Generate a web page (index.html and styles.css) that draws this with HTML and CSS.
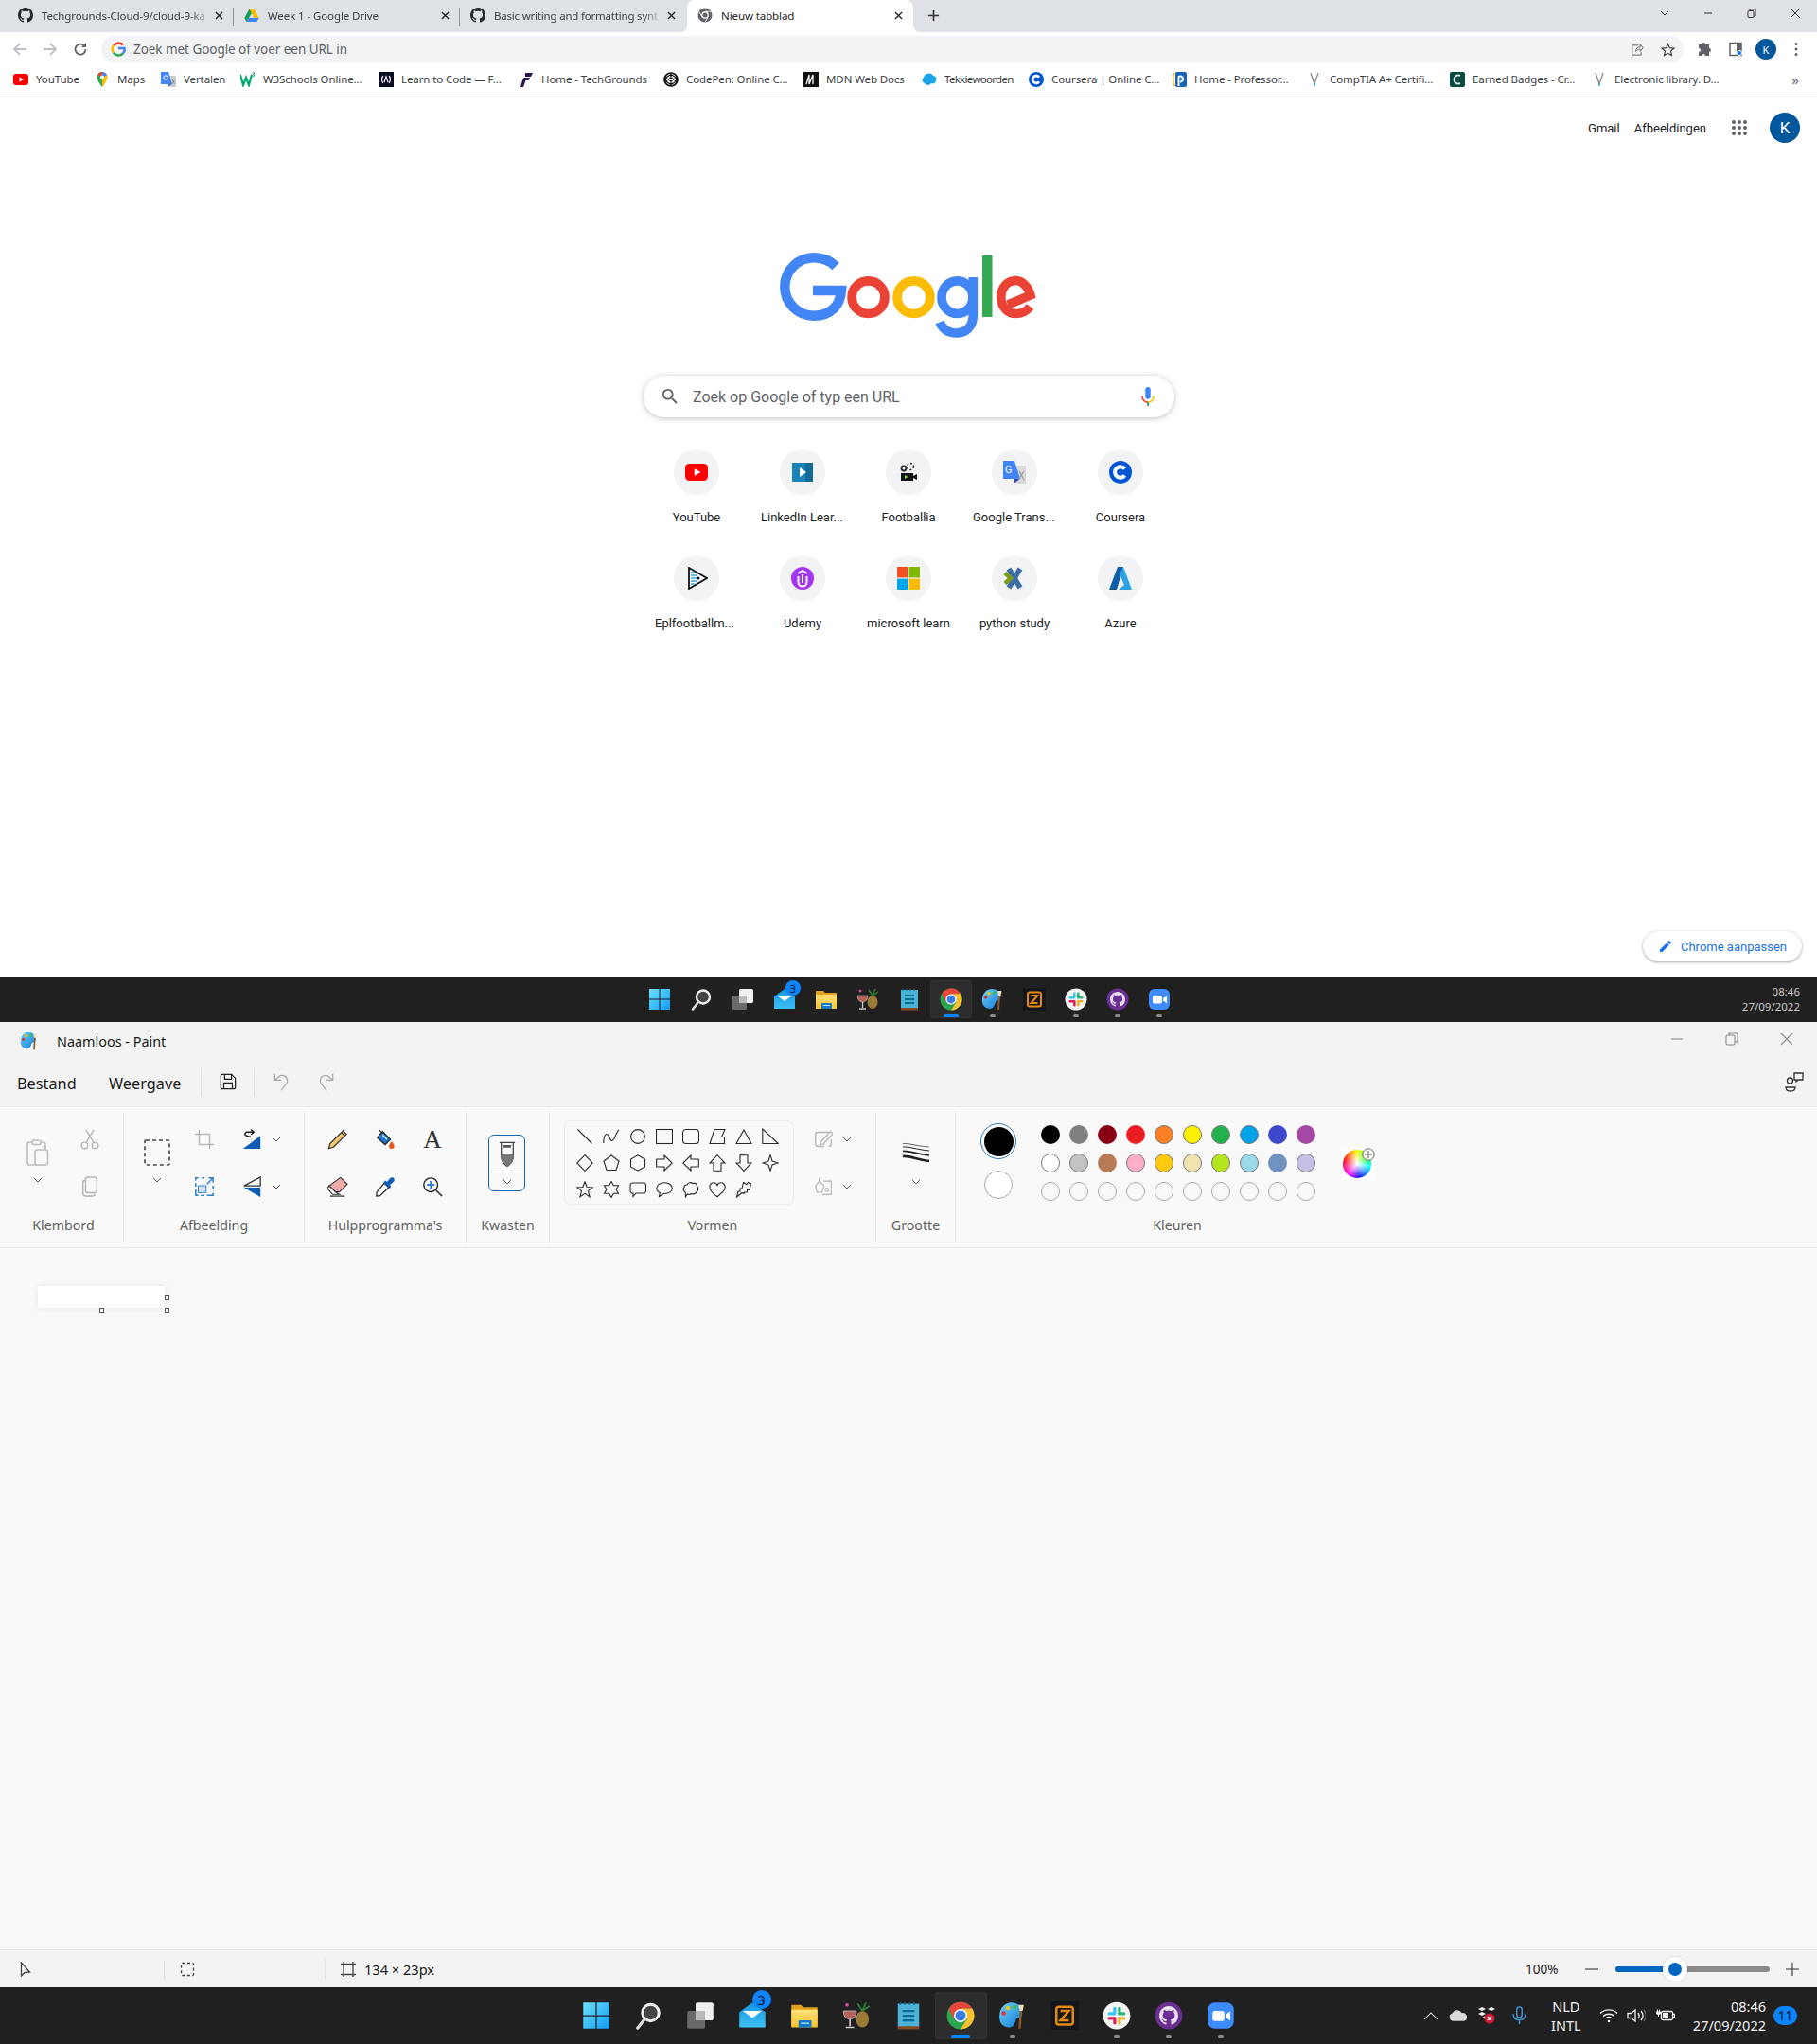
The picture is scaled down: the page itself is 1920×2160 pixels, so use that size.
FILE: index.html
```html
<!DOCTYPE html>
<html lang="nl">
<head>
<meta charset="utf-8">
<title>Nieuw tabblad</title>
<link rel="stylesheet" href="styles.css">
</head>
<body>
<svg class="sprite" aria-hidden="true">
<defs>
<linearGradient id="gwin" x1="0" y1="0" x2="1" y2="1"><stop offset="0" stop-color="#6fe0fb"/><stop offset="1" stop-color="#0f9bf5"/></linearGradient>
<linearGradient id="gmail" x1="0" y1="0" x2="0" y2="1"><stop offset="0" stop-color="#1795e0"/><stop offset="1" stop-color="#3cc0f5"/></linearGradient>
<linearGradient id="gfold" x1="0" y1="0" x2="0" y2="1"><stop offset="0" stop-color="#ffe27a"/><stop offset="1" stop-color="#f7c22f"/></linearGradient>
<linearGradient id="gpal" x1="0" y1="0" x2="1" y2="1"><stop offset="0" stop-color="#6ad4f7"/><stop offset="1" stop-color="#1578d8"/></linearGradient>

<symbol id="s-line" viewBox="0 0 18 18"><path d="M1.5 1.5L16.5 16.5"/></symbol>
<symbol id="s-curve" viewBox="0 0 18 18"><path d="M.8 16C.8 8 3.5 4 6 8c2 4 3 8 6 3 2-4 3-8 5.2-9"/></symbol>
<symbol id="s-oval" viewBox="0 0 18 18"><circle cx="9" cy="9" r="7.4"/></symbol>
<symbol id="s-rect" viewBox="0 0 18 18"><rect x=".5" y="1.5" width="17" height="15"/></symbol>
<symbol id="s-rrect" viewBox="0 0 18 18"><rect x=".5" y="1.5" width="17" height="15" rx="3.5"/></symbol>
<symbol id="s-poly" viewBox="0 0 18 18"><path d="M6 1.5H17L13.5 9.5H16.5V16.5H1Z"/></symbol>
<symbol id="s-tri" viewBox="0 0 18 18"><path d="M9 2L17 16.5H1Z"/></symbol>
<symbol id="s-rtri" viewBox="0 0 18 18"><path d="M.8 1V16.5H17.5Z"/></symbol>
<symbol id="s-dia" viewBox="0 0 18 18"><path d="M9 .7L17.3 9 9 17.3.7 9Z"/></symbol>
<symbol id="s-pent" viewBox="0 0 18 18"><path d="M9 1L17 7 14 16.5H4L1 7Z"/></symbol>
<symbol id="s-hex" viewBox="0 0 18 18"><path d="M9 .8L16.5 5V13L9 17.2 1.5 13V5Z"/></symbol>
<symbol id="s-ar" viewBox="0 0 18 18"><path d="M.7 5H9V1L17.3 9 9 17V13H.7Z"/></symbol>
<symbol id="s-al" viewBox="0 0 18 18"><path d="M17.3 5H9V1L.7 9 9 17V13H17.3Z"/></symbol>
<symbol id="s-au" viewBox="0 0 18 18"><path d="M5 17.3V9H1L9 .7 17 9H13V17.3Z"/></symbol>
<symbol id="s-ad" viewBox="0 0 18 18"><path d="M5 .7V9H1L9 17.3 17 9H13V.7Z"/></symbol>
<symbol id="s-st4" viewBox="0 0 18 18"><path d="M9 .7L11 7 17.3 9 11 11 9 17.3 7 11 .7 9 7 7Z"/></symbol>
<symbol id="s-st5" viewBox="0 0 18 18"><path d="M9 .8L11.2 6.5 17.2 6.8 12.5 10.7 14.1 16.8 9 13.4 3.9 16.8 5.5 10.7.8 6.8 6.8 6.5Z"/></symbol>
<symbol id="s-st6" viewBox="0 0 18 18"><path d="M9 .5L11.3 4.8H16.5L14 9 16.5 13.2H11.3L9 17.5 6.7 13.2H1.5L4 9 1.5 4.8H6.7Z"/></symbol>
<symbol id="s-b1" viewBox="0 0 18 18"><path d="M3.5 2H15A2.5 2.5 0 0 1 17.5 4.5V10.5A2.5 2.5 0 0 1 15 13H7L4 16.5V13H3.5A2.5 2.5 0 0 1 1 10.5V4.5A2.5 2.5 0 0 1 3.5 2Z"/></symbol>
<symbol id="s-b2" viewBox="0 0 18 18"><path d="M9 1.8C14 1.8 17.3 4.5 17.3 7.8S14 13.5 9 13.5H8L3.5 16.5 4.3 12.5C2.2 11.5.8 9.9.8 7.8.8 4.5 4 1.8 9 1.8Z"/></symbol>
<symbol id="s-b3" viewBox="0 0 18 18"><path d="M5 4C6 1.5 9 1 11 2.5 13.5 1.5 15.5 3 15.5 5.5 17.5 7 17 10.5 15 11.5 14.5 13.5 11.5 14.5 9.5 13.5 8 15 6 14.5 5.3 13.8L3.5 16.8 3.2 12C1 11 .5 8 2 6.5 2 5 3.5 4 5 4Z"/></symbol>
<symbol id="s-heart" viewBox="0 0 18 18"><path d="M9 16.8C3 12.3.8 9.3.8 6.2.8 3.5 3 1.8 5 1.8 7 1.8 8.5 3 9 4.5 9.5 3 11 1.8 13 1.8 15 1.8 17.2 3.5 17.2 6.2 17.2 9.3 15 12.3 9 16.8Z"/></symbol>
<symbol id="s-bolt" viewBox="0 0 18 18"><path d="M8.5 1.5L12 3.5 13.5 1.5 16.5 3 15 9.5H12.5V12H9.5L9 13.5 7 12.5 1.5 17 3 11H5V8H7Z"/></symbol>

<symbol id="i-chev" viewBox="0 0 10 10"><path d="M1 3l4 4 4-4" fill="none" stroke="#555" stroke-width="1"/></symbol>
<symbol id="i-paste" viewBox="0 0 24 28" fill="none" stroke="#bdbdbd" stroke-width="1.6"><rect x="1" y="3" width="19" height="24" rx="2.5"/><rect x="6" y="1" width="9" height="4.5" rx="1.5" fill="#f9f9f9"/><rect x="9" y="11" width="13.5" height="16" rx="2.5" fill="#f9f9f9"/></symbol>
<symbol id="i-cut" viewBox="0 0 24 24" fill="none" stroke="#b5b5b5" stroke-width="1.5"><circle cx="6" cy="19" r="3.6"/><circle cx="18" cy="19" r="3.6"/><path d="M7.5 16L16.5 1M16.5 16L7.5 1"/></symbol>
<symbol id="i-copy" viewBox="0 0 24 24" fill="none" stroke="#b5b5b5" stroke-width="1.6"><rect x="7" y="1" width="13" height="18" rx="2.5"/><path d="M7 4.5C5 4.500 4 5.500 4 7V20C4 22 5.500 23 7 23H15C16.500 23 17.500 22 17.500 20.500"/></symbol>
<symbol id="i-select" viewBox="0 0 28 28"><rect x="1" y="1" width="26" height="26" rx="1" fill="none" stroke="#444" stroke-width="1.6" stroke-dasharray="4 3"/></symbol>
<symbol id="i-crop" viewBox="0 0 24 24" fill="none" stroke="#b5b5b5" stroke-width="1.5"><path d="M6 1V18H23M1 6H18V23"/></symbol>
<symbol id="i-resize" viewBox="0 0 24 24" fill="none" stroke="#2b7cc9" stroke-width="1.6"><path d="M5 2H2V5M2 8V12M2 15V22H5M8 22H12M15 22H22V19M22 15V11M9 2H12"/><path d="M15 9L22 2M17 2H22V7"/><rect x="5" y="11" width="9" height="8" fill="#cfe3f5" stroke-width="1"/></symbol>
<symbol id="i-rotate" viewBox="0 0 24 24"><path d="M22 8V23H2Z" fill="#0b5cb5"/><path d="M11 9C5 9 2 6 6 3.500H14M11 .5L14.500 3.500 11 6.500" fill="none" stroke="#222" stroke-width="1.6"/></symbol>
<symbol id="i-flip" viewBox="0 0 24 24"><path d="M22 13V24L3 13Z" fill="#0b5cb5"/><path d="M22 11V1L3 11Z" fill="none" stroke="#333" stroke-width="1.4"/></symbol>
<symbol id="i-pencil" viewBox="0 0 24 24"><path d="M18 2L22 6 7 21 1.500 22.500 3 17Z" fill="#f2c66d" stroke="#333" stroke-width="1.3"/><path d="M16 4L20 8" stroke="#333" stroke-width="1.3"/></symbol>
<symbol id="i-fill" viewBox="0 0 24 24"><path d="M9 3L18 12 12 18 3 10Z" fill="#1c7ad2" stroke="#222" stroke-width="1.4"/><path d="M9 7L14 12" stroke="#fff" stroke-width="1.3"/><path d="M5 1L9 5" stroke="#222" stroke-width="1.4"/><path d="M19.500 14C21 17 22.500 18 22.500 20A3 3 0 0 1 16.500 20C16.500 18 18 17 19.500 14Z" fill="#e4561d"/></symbol>
<symbol id="i-eraser" viewBox="0 0 24 24"><path d="M15 1.500L23 9 14 18H9L2 11Z" fill="#f2abab" stroke="#333" stroke-width="1.2"/><path d="M2 11L0 14 6 21H14L9 18Z" fill="#fff" stroke="#333" stroke-width="1.2"/><path d="M3 23H20" stroke="#333" stroke-width="1.4"/></symbol>
<symbol id="i-picker" viewBox="0 0 24 24"><path d="M11 8L16 13 6 22.500 2 23 2.300 18.500Z" fill="#fff" stroke="#222" stroke-width="1.4"/><path d="M10 7L17 14 19 12 17.500 10 22 6C24 3 21 0 18 2L14 6.500 12 5Z" fill="#0e5fb8"/></symbol>
<symbol id="i-zoom" viewBox="0 0 24 24" fill="none"><circle cx="10" cy="10" r="8" stroke="#222" stroke-width="1.5"/><path d="M16 16L23 23" stroke="#222" stroke-width="1.6"/><path d="M10 5.500V14.500M5.500 10H14.500" stroke="#1c7ad2" stroke-width="1.8"/></symbol>
<symbol id="i-brush" viewBox="0 0 20 32"><path d="M1 3H19M3 3V20C3 25 7 29 10 31 13 29 17 25 17 20V3" fill="none" stroke="#444" stroke-width="1.4"/><path d="M3 16H17V20C17 25 13 29 10 31 7 29 3 25 3 20Z" fill="#777"/><path d="M5 6H15L14 9H6Z" fill="#555"/></symbol>
<symbol id="i-outline" viewBox="0 0 24 24" fill="none" stroke="#b5b5b5" stroke-width="1.6"><path d="M19 3H5A3 3 0 0 0 2 6V18A3 3 0 0 0 5 21H13M22 12V18A3 3 0 0 1 19 21"/><path d="M21 2L24 5 12 18 8 19 9 15Z"/></symbol>
<symbol id="i-fillshape" viewBox="0 0 24 24" fill="none" stroke="#b5b5b5" stroke-width="1.4"><path d="M12 5H22V22H11"/><path d="M2 11L7 5 13 11 10 19H4Z"/><path d="M7 1V6"/><circle cx="16.500" cy="16" r="2.200"/></symbol>
<symbol id="i-size" viewBox="0 0 30 24" fill="none" stroke="#222"><path d="M1 1.500C8 1 14 4 29 5" stroke-width=".7"/><path d="M1 5C8 4.500 14 7.500 29 9" stroke-width="1"/><path d="M1 9.500C8 9 14 12 29 14" stroke-width="1.7"/><path d="M1 15C8 14 14 18 29 20" stroke-width="2.6"/></symbol>
<symbol id="i-save" viewBox="0 0 20 20" fill="none" stroke="#222" stroke-width="1.4"><path d="M3 1.500H14L18.500 6V17A1.500 1.500 0 0 1 17 18.500H3A1.500 1.500 0 0 1 1.500 17V3A1.500 1.500 0 0 1 3 1.500Z"/><path d="M6 1.500V7H14V1.500M5 18.500V11.500H15V18.500"/></symbol>
<symbol id="i-undo" viewBox="0 0 20 24" fill="none" stroke="#aaa" stroke-width="1.5"><path d="M2 2V10H10M2 10L8 5C12 3 18 5 18 11 18 14 15 17 10 23"/></symbol>
<symbol id="i-redo" viewBox="0 0 20 24" fill="none" stroke="#aaa" stroke-width="1.5"><path d="M18 2V10H10M18 10L12 5C8 3 2 5 2 11 2 14 5 17 10 23"/></symbol>
<symbol id="i-share2" viewBox="0 0 22 22" fill="none" stroke="#333" stroke-width="1.3"><circle cx="6.500" cy="10" r="3"/><path d="M2 17H12C12 20 10 21 7 21S2 20 2 17Z"/><path d="M11 2H20V9H15L13 11V9H11Z"/></symbol>

<symbol id="t-win" viewBox="0 0 24 24"><path d="M1 1H11.500V11.500H1ZM12.500 1H23V11.500H12.500ZM1 12.500H11.500V23H1ZM12.500 12.500H23V23H12.500Z" fill="url(#gwin)"/></symbol>
<symbol id="t-search" viewBox="0 0 24 24"><circle cx="14" cy="9.500" r="7" fill="#444" stroke="#eee" stroke-width="2.4"/><path d="M9 15L3 22.500" stroke="#ddd" stroke-width="2.6" stroke-linecap="round"/></symbol>
<symbol id="t-task" viewBox="0 0 24 24"><rect x="8" y="1" width="15" height="15" rx="1.500" fill="#f0f0f0"/><rect x="1" y="8" width="15" height="15" rx="1.500" fill="#6a6a6a"/><rect x="8" y="8" width="8" height="8" fill="#bbb"/></symbol>
<symbol id="t-mail" viewBox="0 0 24 24"><path d="M12 1L23 9V22H1V9Z" fill="url(#gmail)"/><path d="M4 8H20L12 14Z" fill="#fff"/></symbol>
<symbol id="t-folder" viewBox="0 0 24 24"><path d="M1 3H9L11 5H23V21H1Z" fill="#e0a21a"/><path d="M1 7H23V22H1Z" fill="url(#gfold)"/><rect x="7" y="16" width="11" height="6" rx="1" fill="#1479c9"/><rect x="9" y="18" width="7" height="1" fill="#bfe3fa"/></symbol>
<symbol id="t-bar" viewBox="0 0 24 24"><path d="M1 8H12C12 12 10 15 6.500 15 3 15 1 12 1 8Z" fill="#b5635a" stroke="#ccc" stroke-width=".6"/><path d="M6.500 15V21M3 22H10" stroke="#ccc" stroke-width="1.3"/><ellipse cx="17" cy="15" rx="5.500" ry="7" fill="#9a7a34"/><path d="M17 8L13 2M17 8L20 1M17 8L23 4" stroke="#2e7d32" stroke-width="1.5"/><circle cx="4" cy="3" r="1.500" fill="#d24aa0"/></symbol>
<symbol id="t-note" viewBox="0 0 24 24"><rect x="3" y="2" width="18" height="20" fill="#49b4d6"/><rect x="3" y="21" width="18" height="2.500" fill="#8a4b22"/><path d="M7 8H17M7 12H17M7 16H17" stroke="#0f6a8f" stroke-width="1.800"/><path d="M5 1V3M9 1V3M13 1V3M17 1V3" stroke="#0f6a8f" stroke-width="1.200"/></symbol>
<symbol id="t-chrome" viewBox="0 0 24 24"><circle cx="12" cy="12" r="11.500" fill="#2da44e"/><path d="M12 .5A11.500 11.500 0 0 1 22 6.250H12L6.500 15 2.100 6.300A11.500 11.500 0 0 1 12 .5Z" fill="#e8453c"/><path d="M22 6.250A11.500 11.500 0 0 1 12 23.500L17.500 15 12 6.250Z" fill="#fbc02d"/><circle cx="12" cy="12" r="5.600" fill="#fff"/><circle cx="12" cy="12" r="4.400" fill="#3b7de8"/></symbol>
<symbol id="t-paint" viewBox="0 0 24 24"><path d="M11 1C17 1 21 5 20 11 19.500 14 16 13 15 15 14 18 13 22 9 22 4 22 0 18 1 11 1.500 5 6 1 11 1Z" fill="url(#gpal)"/><circle cx="8" cy="5.500" r="1.800" fill="#f4c20d"/><circle cx="13.500" cy="5" r="1.800" fill="#3cba54"/><circle cx="4.500" cy="10" r="1.800" fill="#db3236"/><path d="M19 7L18 23" stroke="#8a5a2b" stroke-width="2"/><path d="M17 3H21.500L20.500 8H18Z" fill="#f0e0b8"/></symbol>
<symbol id="t-zapp" viewBox="0 0 24 24"><rect x="0" y="0" width="24" height="24" fill="#14181c"/><rect x="5" y="4.500" width="14" height="15" rx="2" fill="none" stroke="#e8890c" stroke-width="2"/><path d="M8.500 8H15.500L8.500 16H15.500" fill="none" stroke="#e8890c" stroke-width="2"/></symbol>
<symbol id="t-slack" viewBox="0 0 24 24"><circle cx="12" cy="12" r="11.500" fill="#f5f5f5"/><rect x="9" y="4.500" width="2.600" height="6.500" rx="1.300" fill="#36c5f0"/><rect x="4.500" y="9" width="6.500" height="2.600" rx="1.300" fill="#36c5f0"/><rect x="13" y="4.500" width="2.600" height="6.500" rx="1.300" fill="#2eb67d"/><rect x="13" y="9" width="6.500" height="2.600" rx="1.300" fill="#2eb67d"/><rect x="13" y="13" width="6.500" height="2.600" rx="1.300" fill="#ecb22e"/><rect x="13" y="13" width="2.600" height="6.500" rx="1.300" fill="#ecb22e"/><rect x="9" y="13" width="2.600" height="6.500" rx="1.300" fill="#e01e5a"/><rect x="4.500" y="13" width="6.500" height="2.600" rx="1.300" fill="#e01e5a"/></symbol>
<symbol id="t-gh" viewBox="0 0 24 24"><circle cx="12" cy="12" r="11.500" fill="#6b2f93"/><g transform="translate(4 4)"><path fill="#e8e0f0" d="M8 0C3.580 0 0 3.580 0 8c0 3.540 2.290 6.530 5.470 7.590.4.070.55-.17.55-.38 0-.19-.01-.82-.01-1.490-2.010.37-2.530-.49-2.690-.94-.09-.23-.48-.94-.82-1.130-.28-.15-.68-.52-.01-.53.630-.01 1.080.58 1.230.82.720 1.210 1.870.87 2.330.66.070-.52.28-.87.51-1.070-1.780-.2-3.640-.89-3.640-3.950 0-.87.31-1.590.82-2.150-.08-.2-.36-1.020.08-2.120 0 0 .67-.21 2.200.82.640-.18 1.320-.27 2-.27.68 0 1.360.09 2 .27 1.530-1.040 2.200-.82 2.200-.82.44 1.100.16 1.920.08 2.120.51.56.82 1.270.82 2.150 0 3.070-1.870 3.750-3.650 3.950.29.25.54.73.54 1.480 0 1.070-.01 1.930-.01 2.200 0 .21.15.46.55.38A8.013 8.013 0 0016 8c0-4.420-3.580-8-8-8z"/></g></symbol>
<symbol id="t-zoom" viewBox="0 0 24 24"><rect x="1" y="1" width="22" height="22" rx="6" fill="#3d8bfd"/><rect x="5" y="8" width="10" height="8.500" rx="2" fill="#fff"/><path d="M16 11L20 8.300V16.200L16 13.500Z" fill="#fff"/></symbol>

<symbol id="f-gh" viewBox="0 0 16 16"><path fill="#24292f" d="M8 0C3.580 0 0 3.580 0 8c0 3.540 2.290 6.530 5.470 7.590.4.070.55-.17.55-.38 0-.19-.01-.82-.01-1.490-2.010.37-2.530-.49-2.690-.94-.09-.23-.48-.94-.82-1.130-.28-.15-.68-.52-.01-.53.630-.01 1.080.58 1.230.82.720 1.210 1.870.87 2.330.66.070-.52.28-.87.51-1.070-1.780-.2-3.640-.89-3.640-3.950 0-.87.31-1.590.82-2.150-.08-.2-.36-1.020.08-2.120 0 0 .67-.21 2.200.82.640-.18 1.320-.27 2-.27.68 0 1.360.09 2 .27 1.530-1.040 2.200-.82 2.200-.82.44 1.100.16 1.920.08 2.120.51.56.82 1.270.82 2.150 0 3.070-1.870 3.750-3.650 3.950.29.25.54.73.54 1.480 0 1.070-.01 1.930-.01 2.200 0 .21.15.46.55.38A8.013 8.013 0 0016 8c0-4.420-3.580-8-8-8z"/></symbol>
<symbol id="f-drive" viewBox="0 0 16 16"><path d="M5.500 1.500H10.500L5 11 2.500 15 .3 11Z" fill="#0f9d58"/><path d="M10.500 1.500L15.700 11H10.500L5.500 1.500Z" fill="#fbbc05"/><path d="M5 11H15.700L13.300 15H2.600Z" fill="#4285f4"/></symbol>
<symbol id="f-newtab" viewBox="0 0 16 16"><circle cx="8" cy="8" r="7.500" fill="#5f6368"/><circle cx="8" cy="8" r="3.800" fill="#fff"/><circle cx="8" cy="8" r="2.500" fill="#5f6368"/><path d="M8 4.200H14.500M5 10L1.800 4.500M11.200 10L8 15.500" stroke="#fff" stroke-width=".9"/></symbol>
<symbol id="f-g" viewBox="0 0 16 16" fill="none" stroke-width="2.600"><path d="M13 3.500A6.500 6.500 0 0 0 3 4.200" stroke="#ea4335"/><path d="M3 4.200A6.500 6.500 0 0 0 3 11.800" stroke="#fbbc05"/><path d="M3 11.800A6.500 6.500 0 0 0 13 12.500" stroke="#34a853"/><path d="M13 12.500A6.500 6.500 0 0 0 14.500 7H8" stroke="#4285f4"/></symbol>
<symbol id="f-yt" viewBox="0 0 16 16"><rect x="0" y="2" width="16" height="12" rx="3" fill="#f00"/><path d="M6.500 5.500L11 8 6.500 10.500Z" fill="#fff"/></symbol>
<symbol id="f-maps" viewBox="0 0 16 16"><path d="M8 0A5.500 5.500 0 0 0 2.500 5.500C2.500 9.500 8 16 8 16" fill="#34a853"/><path d="M8 0A5.500 5.500 0 0 1 13.500 5.500C13.500 9.500 8 16 8 16Z" fill="#fbbc05"/><path d="M3 3.500A5.500 5.500 0 0 1 8 0V4Z" fill="#ea4335"/><path d="M8 0A5.500 5.500 0 0 1 13 3.500L8 5.500Z" fill="#4285f4"/><circle cx="8" cy="5.500" r="2" fill="#fff"/></symbol>
<symbol id="f-tr" viewBox="0 0 16 16"><path d="M7 4H16V16H9Z" fill="#ccc"/><path d="M0 0H8L12 13H0Z" fill="#4285f4"/><path d="M8 13L7 16 12 13Z" fill="#3a5ed0"/><circle cx="5" cy="6" r="2.200" fill="none" stroke="#fff" stroke-width="1"/><path d="M12 8L14.500 13M14.500 8L12 13" stroke="#888" stroke-width=".8"/></symbol>
<symbol id="f-w3" viewBox="0 0 16 16"><path d="M0 3L3 14 6 6 9 14 12 3" fill="none" stroke="#04aa6d" stroke-width="2.200"/><path d="M12.500 1H15L13.500 2.500 15 4H12.500" fill="none" stroke="#04aa6d"/></symbol>
<symbol id="f-learn" viewBox="0 0 16 16"><rect width="16" height="16" fill="#0a0a23"/><path d="M5 4C3 6 3 10 5 12M11 4C13 6 13 10 11 12M6 11L8 5 10 11" fill="none" stroke="#fff" stroke-width="1.200"/></symbol>
<symbol id="f-tg" viewBox="0 0 16 16"><path d="M7 1H15L13 5H7ZM5.500 6H12L10.500 9H7.500L5 16H2L4 9Z" fill="#2c1454"/></symbol>
<symbol id="f-cp" viewBox="0 0 16 16" fill="none" stroke="#111" stroke-width="1.200"><circle cx="8" cy="8" r="7" stroke-width="1.700"/><path d="M8 2.500L13.500 6V10L8 13.500 2.500 10V6ZM8 2.500V6L2.500 10M13.500 10L8 6M8 13.500V10L2.500 6M13.500 6L8 10"/></symbol>
<symbol id="f-mdn" viewBox="0 0 16 16"><rect width="16" height="16" fill="#111"/><path d="M3 13L6 3V13L10 3V13" fill="none" stroke="#fff" stroke-width="1.300"/></symbol>
<symbol id="f-tek" viewBox="0 0 16 16"><path d="M6 2C9 1 11 2 12 4 15 4 16 7 15 9 15 12 12 13 10 12 8 15 4 14 3 12 0 11 0 7 2 6 2 4 4 2 6 2Z" fill="#1ba3e8"/></symbol>
<symbol id="f-c" viewBox="0 0 24 24"><circle cx="12" cy="12" r="12" fill="#0056d2"/><path d="M16.500 8.500A5.800 5.800 0 1 0 16.500 15.500" fill="none" stroke="#fff" stroke-width="4"/></symbol>
<symbol id="f-prof" viewBox="0 0 16 16"><path d="M4 1C1 1 1 15 4 15" fill="none" stroke="#f2b632" stroke-width="1.500"/><rect x="4" y="0" width="12" height="16" rx="2" fill="#1763b5"/><path d="M7.500 15V5A3 3 0 1 1 9 10.500" fill="none" stroke="#fff" stroke-width="2"/></symbol>
<symbol id="f-v" viewBox="0 0 16 16"><path d="M4 1L8 13 12 1" fill="none" stroke="#888" stroke-width="1.300"/><path d="M8 12V15" stroke="#3aa0c0" stroke-width="1.500"/></symbol>
<symbol id="f-cred" viewBox="0 0 16 16"><rect width="16" height="16" rx="2" fill="#0c4b41"/><path d="M11 4A4.500 4.500 0 1 0 11 12" fill="none" stroke="#e6f3f0" stroke-width="1.800"/></symbol>
<symbol id="l-li" viewBox="0 0 24 24"><rect x="1" y="2" width="22" height="20" fill="#1a84b8"/><rect x="15" y="2" width="8" height="20" fill="#146a96"/><path d="M9 7L16 12 9 17Z" fill="#fff"/></symbol>
<symbol id="l-ftb" viewBox="0 0 24 24"><rect x="4" y="13" width="13" height="8" fill="#111"/><path d="M17 16L21 14V20L17 18Z" fill="#111"/><path d="M8 15L12 17 8 19Z" fill="#7ed321"/><circle cx="7" cy="8" r="2.500" fill="none" stroke="#222" stroke-width="1.800"/><circle cx="14" cy="6" r="3.500" fill="none" stroke="#222" stroke-width="1.500" stroke-dasharray="2 2"/></symbol>
<symbol id="l-tr" viewBox="0 0 24 24"><path d="M11 5H24V24H13Z" fill="#d8d8d8"/><path d="M0 0H12L18 19H0Z" fill="#4285f4"/><path d="M12 19L11 24 18 19Z" fill="#3a3eb0"/><path d="M17 11L22 20M22 11L16 20" stroke="#999" stroke-width="1.200"/><text x="2" y="13" font-size="11" font-family="Roboto, sans-serif" fill="#fff">G</text></symbol>
<symbol id="l-epl" viewBox="0 0 24 24"><path d="M4 1L23 12 4 23Z" fill="#fff" stroke="#111" stroke-width="1.800"/><path d="M6 6H10M6 9H13M6 12H15M6 15H13M6 18H10" stroke="#35a7d8" stroke-width="1.500"/><circle cx="14" cy="12" r="1.500" fill="#111"/></symbol>
<symbol id="l-ud" viewBox="0 0 24 24"><circle cx="12" cy="12" r="12" fill="#a435f0"/><path d="M7.500 10V16A4.500 4.500 0 0 0 16.500 16V10" fill="none" stroke="#fff" stroke-width="2"/><path d="M7 7L12 4 17 7" fill="none" stroke="#fff" stroke-width="1.800"/><path d="M12 8V17" stroke="#fff" stroke-width="1.800"/></symbol>
<symbol id="l-ms" viewBox="0 0 24 24"><rect x="0" y="0" width="11.400" height="11.400" fill="#f25022"/><rect x="12.600" y="0" width="11.400" height="11.400" fill="#7fba00"/><rect x="0" y="12.600" width="11.400" height="11.400" fill="#00a4ef"/><rect x="12.600" y="12.600" width="11.400" height="11.400" fill="#ffb900"/></symbol>
<symbol id="l-py" viewBox="0 0 24 24"><path d="M6 2L18 22M18 2L6 22" stroke="#3d6ea5" stroke-width="5.500"/><path d="M2 6.500L8 12 2 17.500" fill="none" stroke="#7c9a1c" stroke-width="4.500"/></symbol>
<symbol id="l-az" viewBox="0 0 24 24"><path d="M9 0H15L8 24H0Z" fill="#0c5ea8"/><path d="M15 0L24 24H10L16 19 11 8Z" fill="#2aa3e6"/></symbol>
</defs>
</svg>

<main class="screen">
  <section class="chrome">
    <header class="tabstrip">
      <div class="tab tab-sep"><svg class="fav"><use href="#f-gh"/></svg><span class="tab-title">Techgrounds-Cloud-9/cloud-9-ka</span><span class="tab-x"><svg viewBox="0 0 10 10"><path d="M1 1l8 8M9 1l-8 8"/></svg></span></div>
      <div class="tab tab-sep"><svg class="fav"><use href="#f-drive"/></svg><span class="tab-title">Week 1 - Google Drive</span><span class="tab-x"><svg viewBox="0 0 10 10"><path d="M1 1l8 8M9 1l-8 8"/></svg></span></div>
      <div class="tab"><svg class="fav"><use href="#f-gh"/></svg><span class="tab-title tab-title-narrow">Basic writing and formatting synt</span><span class="tab-x"><svg viewBox="0 0 10 10"><path d="M1 1l8 8M9 1l-8 8"/></svg></span></div>
      <div class="tab tab-active"><svg class="fav"><use href="#f-newtab"/></svg><span class="tab-title tab-title-plain">Nieuw tabblad</span><span class="tab-x"><svg viewBox="0 0 10 10"><path d="M1 1l8 8M9 1l-8 8"/></svg></span></div>
      <div class="new-tab"><svg viewBox="0 0 14 14"><path d="M7 1v12M1 7h12"/></svg></div>
      <div class="win-ctl">
        <svg viewBox="0 0 12 12"><path d="M2 4l4 4 4-4"/></svg>
        <svg viewBox="0 0 12 12"><path d="M2 6h8"/></svg>
        <svg viewBox="0 0 12 12"><rect x="2" y="3.500" width="6" height="7" rx="1"/><path d="M4 3.500V2h6v7H8"/></svg>
        <svg viewBox="0 0 12 12"><path d="M1 1l10 10M11 1L1 11"/></svg>
      </div>
    </header>
    <div class="toolbar">
      <div class="tbtn tbtn-off"><svg viewBox="0 0 16 16"><path d="M15 8H2M8 2L2 8l6 6"/></svg></div>
      <div class="tbtn tbtn-off"><svg viewBox="0 0 16 16"><path d="M1 8h13M8 2l6 6-6 6"/></svg></div>
      <div class="tbtn"><svg viewBox="0 0 16 16"><path d="M13.500 8A5.500 5.500 0 1 1 12 4.300"/><path class="solid" d="M14 1v5H9z"/></svg></div>
      <div class="omnibox">
        <svg class="fav"><use href="#f-g"/></svg>
        <span class="omni-text">Zoek met Google of voer een URL in</span>
        <svg class="omni-ic" viewBox="0 0 16 16"><path d="M10 3H3v11h10v-3"/><path d="M7 10c0-3 2-5 5-5V2l3 4-3 4V7.500c-2 0-4 1-5 2.500z"/></svg>
        <svg class="omni-ic omni-star" viewBox="0 0 16 16"><path d="M8 1.500l2 4.500 4.800.5-3.600 3.200 1 4.800L8 12.100l-4.200 2.400 1-4.800L1.200 6.500 6 6z"/></svg>
      </div>
      <div class="tbtn"><svg viewBox="0 0 16 16"><path class="solid" d="M6 1a2 2 0 0 1 2 2h4v4a2 2 0 0 1 0 4v4H8a2 2 0 0 0-4 0H1v-4a2 2 0 0 0 0-4V3h3a2 2 0 0 1 2-2z"/></svg></div>
      <div class="tbtn panel-ic"><svg viewBox="0 0 16 16"><rect x="2" y="1.500" width="12" height="13" fill="none"/><path class="solid" d="M9 1.500h5v13H9z"/><circle class="dot-blue" cx="12" cy="12" r="2.600"/></svg></div>
      <div class="tbtn"><span class="avatar-s">K</span></div>
      <div class="tbtn"><svg viewBox="0 0 16 16"><path class="solid" d="M6.500 2.500a1.500 1.500 0 1 0 3 0 1.500 1.500 0 1 0-3 0M6.500 8a1.500 1.500 0 1 0 3 0 1.500 1.500 0 1 0-3 0M6.500 13.500a1.500 1.500 0 1 0 3 0 1.500 1.500 0 1 0-3 0"/></svg></div>
    </div>
    <nav class="bookmarks">
      <a class="bm"><svg class="fav"><use href="#f-yt"/></svg><span>YouTube</span></a>
      <a class="bm"><svg class="fav"><use href="#f-maps"/></svg><span>Maps</span></a>
      <a class="bm"><svg class="fav"><use href="#f-tr"/></svg><span>Vertalen</span></a>
      <a class="bm"><svg class="fav"><use href="#f-w3"/></svg><span>W3Schools Online...</span></a>
      <a class="bm"><svg class="fav"><use href="#f-learn"/></svg><span>Learn to Code — F...</span></a>
      <a class="bm"><svg class="fav"><use href="#f-tg"/></svg><span>Home - TechGrounds</span></a>
      <a class="bm"><svg class="fav"><use href="#f-cp"/></svg><span>CodePen: Online C...</span></a>
      <a class="bm"><svg class="fav"><use href="#f-mdn"/></svg><span>MDN Web Docs</span></a>
      <a class="bm bm-tight"><svg class="fav"><use href="#f-tek"/></svg><span>Tekkiewoorden</span></a>
      <a class="bm"><svg class="fav"><use href="#f-c"/></svg><span>Coursera | Online C...</span></a>
      <a class="bm"><svg class="fav"><use href="#f-prof"/></svg><span>Home - Professor...</span></a>
      <a class="bm"><svg class="fav"><use href="#f-v"/></svg><span>CompTIA A+ Certifi...</span></a>
      <a class="bm"><svg class="fav"><use href="#f-cred"/></svg><span>Earned Badges - Cr...</span></a>
      <a class="bm"><svg class="fav"><use href="#f-v"/></svg><span>Electronic library. D...</span></a>
      <span class="bm-more">»</span>
    </nav>
    <div class="ntp">
      <div class="ntp-top">
        <a class="ntp-link ntp-gmail">Gmail</a>
        <a class="ntp-link">Afbeeldingen</a>
        <svg class="apps" viewBox="0 0 24 24"><path d="M6 8a2 2 0 1 0 0-4 2 2 0 0 0 0 4zm6 0a2 2 0 1 0 0-4 2 2 0 0 0 0 4zm6 0a2 2 0 1 0 0-4 2 2 0 0 0 0 4zM6 14a2 2 0 1 0 0-4 2 2 0 0 0 0 4zm6 0a2 2 0 1 0 0-4 2 2 0 0 0 0 4zm6 0a2 2 0 1 0 0-4 2 2 0 0 0 0 4zM6 20a2 2 0 1 0 0-4 2 2 0 0 0 0 4zm6 0a2 2 0 1 0 0-4 2 2 0 0 0 0 4zm6 0a2 2 0 1 0 0-4 2 2 0 0 0 0 4z"/></svg>
        <span class="avatar-l">K</span>
      </div>
      <svg class="logo" viewBox="0 0 272 92" role="img" aria-label="Google logo" fill="none">
        <path d="M59 14.500C53 8.500 45.500 5.300 36 5.300 19 5.300 5.300 19 5.300 36 5.300 53 19 66.700 36 66.700 45.500 66.700 52.500 63.500 57.500 58.500 62.500 53.500 64.500 47 65 40H35" stroke="#4285f4" stroke-width="10.500"/>
        <ellipse cx="93.500" cy="47.200" rx="17.400" ry="17.300" stroke="#ea4335" stroke-width="9.700"/>
        <ellipse cx="141.500" cy="47.200" rx="17.400" ry="17.300" stroke="#fbbc05" stroke-width="9.700"/>
        <ellipse cx="187.500" cy="47.200" rx="16.500" ry="17.300" stroke="#4285f4" stroke-width="9.700"/>
        <path d="M204.300 26V66C204.300 78 196.500 85 186.500 85 177 85 171.500 79.500 169 73.500" stroke="#4285f4" stroke-width="9.700"/>
        <rect x="214" y="3" width="10.500" height="65" fill="#34a853"/>
        <path d="M241 55L265 45C263 37 256.500 29.500 249.500 29.500 239.500 29.500 233.800 38 233.800 47 233.800 57 240 64.500 250 64.500 257 64.500 261.500 61 264.500 57" stroke="#ea4335" stroke-width="9.500"/>
      </svg>
      <div class="searchbox">
        <svg class="s-ic" viewBox="0 0 24 24"><path d="M15.500 14h-.79l-.28-.27A6.470 6.470 0 0 0 16 9.500 6.500 6.500 0 1 0 9.500 16c1.610 0 3.090-.59 4.230-1.570l.27.28v.79l5 4.990L20.490 19l-4.990-5zm-6 0C7.010 14 5 11.990 5 9.500S7.010 5 9.500 5 14 7.010 14 9.500 11.990 14 9.500 14z"/></svg>
        <span class="s-text">Zoek op Google of typ een URL</span>
        <svg class="s-mic" viewBox="0 0 24 24" fill="none"><rect x="9" y="1" width="6" height="14" rx="3" fill="#4285f4"/><path d="M5.500 11.500C5.500 16 8.500 18.500 12 18.500" stroke="#ea4335" stroke-width="1.800"/><path d="M18.500 11.500C18.500 16 15.500 18.500 12 18.500" stroke="#fbbc05" stroke-width="1.800"/><path d="M12 18.500V23" stroke="#34a853" stroke-width="2"/></svg>
      </div>
      <div class="tiles">
        <a class="tile"><span class="tile-ic"><svg><use href="#f-yt"/></svg></span><span class="tile-name">YouTube</span></a>
        <a class="tile"><span class="tile-ic"><svg><use href="#l-li"/></svg></span><span class="tile-name tile-cut">LinkedIn Lear...</span></a>
        <a class="tile"><span class="tile-ic"><svg><use href="#l-ftb"/></svg></span><span class="tile-name">Footballia</span></a>
        <a class="tile"><span class="tile-ic"><svg><use href="#l-tr"/></svg></span><span class="tile-name tile-cut">Google Trans...</span></a>
        <a class="tile"><span class="tile-ic"><svg><use href="#f-c"/></svg></span><span class="tile-name">Coursera</span></a>
        <a class="tile"><span class="tile-ic"><svg><use href="#l-epl"/></svg></span><span class="tile-name tile-cut">Eplfootballm...</span></a>
        <a class="tile"><span class="tile-ic"><svg><use href="#l-ud"/></svg></span><span class="tile-name">Udemy</span></a>
        <a class="tile"><span class="tile-ic"><svg><use href="#l-ms"/></svg></span><span class="tile-name">microsoft learn</span></a>
        <a class="tile"><span class="tile-ic"><svg><use href="#l-py"/></svg></span><span class="tile-name">python study</span></a>
        <a class="tile"><span class="tile-ic"><svg><use href="#l-az"/></svg></span><span class="tile-name">Azure</span></a>
      </div>
      <a class="customize"><svg viewBox="0 0 24 24"><path d="M3 17.250V21h3.750L17.810 9.940l-3.750-3.750L3 17.250zM20.710 7.040a1 1 0 0 0 0-1.410l-2.340-2.340a1 1 0 0 0-1.410 0l-1.830 1.830 3.750 3.750 1.830-1.830z"/></svg>Chrome aanpassen</a>
    </div>
  </section>

  <footer class="taskbar tb-s">
    <span class="tb-left"></span>
    <div class="tb-icons">
      <span class="tb-item"><svg><use href="#t-win"/></svg></span>
      <span class="tb-item"><svg><use href="#t-search"/></svg></span>
      <span class="tb-item"><svg><use href="#t-task"/></svg></span>
      <span class="tb-item"><svg><use href="#t-mail"/></svg><b class="tb-badge">3</b></span>
      <span class="tb-item"><svg><use href="#t-folder"/></svg></span>
      <span class="tb-item"><svg><use href="#t-bar"/></svg></span>
      <span class="tb-item"><svg><use href="#t-note"/></svg></span>
      <span class="tb-item tb-active"><svg><use href="#t-chrome"/></svg></span>
      <span class="tb-item tb-run"><svg><use href="#t-paint"/></svg></span>
      <span class="tb-item"><svg><use href="#t-zapp"/></svg></span>
      <span class="tb-item tb-run"><svg><use href="#t-slack"/></svg></span>
      <span class="tb-item tb-run"><svg><use href="#t-gh"/></svg></span>
      <span class="tb-item tb-run"><svg><use href="#t-zoom"/></svg></span>
    </div>
    <div class="tb-right">
      <div class="clock clock-s"><span>08:46</span><span>27/09/2022</span></div>
    </div>
  </footer>

  <section class="paint">
    <div class="p-title">
      <svg class="p-logo"><use href="#t-paint"/></svg>
      <span class="p-name">Naamloos - Paint</span>
      <div class="p-ctl">
        <svg viewBox="0 0 14 14"><path d="M1 7h12"/></svg>
        <svg viewBox="0 0 14 14"><rect x="1" y="3" width="9" height="10" rx="1.500"/><path d="M4 3V1h9v9h-3"/></svg>
        <svg viewBox="0 0 14 14"><path d="M1 1l12 12M13 1L1 13"/></svg>
      </div>
    </div>
    <div class="p-menu">
      <span class="p-mi">Bestand</span>
      <span class="p-mi">Weergave</span>
      <span class="p-sep"></span>
      <span class="p-qa"><svg class="ic18"><use href="#i-save"/></svg></span>
      <span class="p-sep p-sep-2"></span>
      <span class="p-qa p-qa-s"><svg class="ic20"><use href="#i-undo"/></svg></span>
      <span class="p-qa p-qa-s"><svg class="ic20"><use href="#i-redo"/></svg></span>
      <svg class="p-share"><use href="#i-share2"/></svg>
    </div>
    <div class="ribbon">
      <div class="group g-clip">
        <div class="g-body">
          <div class="big-cell"><svg class="ic28"><use href="#i-paste"/></svg><svg class="chev"><use href="#i-chev"/></svg></div>
          <div class="stack">
            <span class="cell"><svg class="ic22"><use href="#i-cut"/></svg></span>
            <span class="cell"><svg class="ic22"><use href="#i-copy"/></svg></span>
          </div>
        </div>
        <div class="g-label">Klembord</div>
      </div>
      <div class="group g-img">
        <div class="g-body">
          <div class="big-cell"><svg class="ic28"><use href="#i-select"/></svg><svg class="chev"><use href="#i-chev"/></svg></div>
          <div class="stack">
            <span class="cell"><svg class="ic22"><use href="#i-crop"/></svg></span>
            <span class="cell"><svg class="ic22"><use href="#i-resize"/></svg></span>
          </div>
          <div class="stack stack-drop">
            <span class="cell"><svg class="ic22"><use href="#i-rotate"/></svg><svg class="chev"><use href="#i-chev"/></svg></span>
            <span class="cell"><svg class="ic22"><use href="#i-flip"/></svg><svg class="chev"><use href="#i-chev"/></svg></span>
          </div>
        </div>
        <div class="g-label">Afbeelding</div>
      </div>
      <div class="group g-tools">
        <div class="g-body tools-grid">
          <span class="cell"><svg class="ic22"><use href="#i-pencil"/></svg></span>
          <span class="cell"><svg class="ic22"><use href="#i-fill"/></svg></span>
          <span class="cell tool-a">A</span>
          <span class="cell"><svg class="ic22"><use href="#i-eraser"/></svg></span>
          <span class="cell"><svg class="ic22"><use href="#i-picker"/></svg></span>
          <span class="cell"><svg class="ic22"><use href="#i-zoom"/></svg></span>
        </div>
        <div class="g-label">Hulpprogramma's</div>
      </div>
      <div class="group g-brush">
        <div class="g-body">
          <div class="brush-btn">
            <span class="brush-top"><svg><use href="#i-brush"/></svg></span>
            <span class="brush-bot"><svg class="chev"><use href="#i-chev"/></svg></span>
          </div>
        </div>
        <div class="g-label">Kwasten</div>
      </div>
      <div class="group g-shapes">
        <div class="g-body">
          <div class="shapes">
            <svg><use href="#s-line"/></svg><svg><use href="#s-curve"/></svg><svg><use href="#s-oval"/></svg><svg><use href="#s-rect"/></svg><svg><use href="#s-rrect"/></svg><svg><use href="#s-poly"/></svg><svg><use href="#s-tri"/></svg><svg><use href="#s-rtri"/></svg>
            <svg><use href="#s-dia"/></svg><svg><use href="#s-pent"/></svg><svg><use href="#s-hex"/></svg><svg><use href="#s-ar"/></svg><svg><use href="#s-al"/></svg><svg><use href="#s-au"/></svg><svg><use href="#s-ad"/></svg><svg><use href="#s-st4"/></svg>
            <svg><use href="#s-st5"/></svg><svg><use href="#s-st6"/></svg><svg><use href="#s-b1"/></svg><svg><use href="#s-b2"/></svg><svg><use href="#s-b3"/></svg><svg><use href="#s-heart"/></svg><svg><use href="#s-bolt"/></svg>
          </div>
          <div class="stack stack-shape">
            <span class="cell"><svg class="ic20"><use href="#i-outline"/></svg><svg class="chev"><use href="#i-chev"/></svg></span>
            <span class="cell"><svg class="ic20"><use href="#i-fillshape"/></svg><svg class="chev"><use href="#i-chev"/></svg></span>
          </div>
        </div>
        <div class="g-label">Vormen</div>
      </div>
      <div class="group g-size">
        <div class="g-body">
          <div class="big-cell size-cell"><svg class="ic-size"><use href="#i-size"/></svg><svg class="chev"><use href="#i-chev"/></svg></div>
        </div>
        <div class="g-label">Grootte</div>
      </div>
      <div class="group g-colors">
        <div class="g-body">
          <div class="cur-colors">
            <span class="cur-1"><i></i></span>
            <span class="cur-2"></span>
          </div>
          <div class="palette">
            <i class="sw sw-black"></i><i class="sw sw-gray"></i><i class="sw sw-maroon"></i><i class="sw sw-red"></i><i class="sw sw-orange ring"></i><i class="sw sw-yellow ring"></i><i class="sw sw-green ring"></i><i class="sw sw-blue ring"></i><i class="sw sw-indigo"></i><i class="sw sw-purple"></i>
            <i class="sw sw-white ring"></i><i class="sw sw-silver ring"></i><i class="sw sw-brown"></i><i class="sw sw-pink ring"></i><i class="sw sw-gold ring"></i><i class="sw sw-cream ring"></i><i class="sw sw-lime ring"></i><i class="sw sw-sky ring"></i><i class="sw sw-steel"></i><i class="sw sw-lav ring"></i>
            <i class="sw empty"></i><i class="sw empty"></i><i class="sw empty"></i><i class="sw empty"></i><i class="sw empty"></i><i class="sw empty"></i><i class="sw empty"></i><i class="sw empty"></i><i class="sw empty"></i><i class="sw empty"></i>
          </div>
          <div class="wheel"><i class="wheel-disc"></i><svg class="wheel-plus" viewBox="0 0 14 14"><circle cx="7" cy="7" r="6.200"/><path d="M7 3v8M3 7h8"/></svg></div>
        </div>
        <div class="g-label">Kleuren</div>
      </div>
    </div>
    <div class="canvas-area">
      <div class="canvas">
        <i class="handle h-r"></i><i class="handle h-b"></i><i class="handle h-c"></i>
      </div>
    </div>
    <div class="status">
      <div class="st-cell st-1"><svg viewBox="0 0 12 16"><path d="M1.500 1V15L5 11.500L10.500 11Z"/></svg></div>
      <div class="st-cell st-2"><svg viewBox="0 0 16 16"><rect x="1.500" y="1.500" width="13" height="13" rx="1" stroke-dasharray="3 2.500"/></svg></div>
      <div class="st-cell st-3"><svg viewBox="0 0 16 16"><path d="M3 0v16M13 0v16M0 2.500h16M0 13.500h16"/></svg><span>134 × 23px</span></div>
      <div class="st-zoom">
        <span class="st-pct">100%</span>
        <svg class="st-z" viewBox="0 0 16 16"><path d="M1 8h14"/></svg>
        <div class="slider"><i class="slider-fill"></i><i class="slider-thumb"></i></div>
        <svg class="st-z" viewBox="0 0 16 16"><path d="M1 8h14M8 1v14"/></svg>
      </div>
    </div>
  </section>

  <footer class="taskbar tb-l">
    <span class="tb-left"></span>
    <div class="tb-icons">
      <span class="tb-item"><svg><use href="#t-win"/></svg></span>
      <span class="tb-item"><svg><use href="#t-search"/></svg></span>
      <span class="tb-item"><svg><use href="#t-task"/></svg></span>
      <span class="tb-item"><svg><use href="#t-mail"/></svg><b class="tb-badge">3</b></span>
      <span class="tb-item"><svg><use href="#t-folder"/></svg></span>
      <span class="tb-item"><svg><use href="#t-bar"/></svg></span>
      <span class="tb-item"><svg><use href="#t-note"/></svg></span>
      <span class="tb-item tb-active"><svg><use href="#t-chrome"/></svg></span>
      <span class="tb-item tb-run"><svg><use href="#t-paint"/></svg></span>
      <span class="tb-item"><svg><use href="#t-zapp"/></svg></span>
      <span class="tb-item tb-run"><svg><use href="#t-slack"/></svg></span>
      <span class="tb-item tb-run"><svg><use href="#t-gh"/></svg></span>
      <span class="tb-item tb-run"><svg><use href="#t-zoom"/></svg></span>
    </div>
    <div class="tb-right tray">
      <svg class="tr-chev" viewBox="0 0 18 10"><path d="M1 9l8-8 8 8"/></svg>
      <svg class="tr-cloud" viewBox="0 0 22 14"><path d="M6 13A4.500 4.500 0 0 1 5 4.200 6 6 0 0 1 15.500 4 4.500 4.500 0 0 1 21 9c0 2-1.500 4-4 4z"/></svg>
      <svg class="tr-drop" viewBox="0 0 20 20"><path d="M1 3l4-2 4 2-4 2zM11 3l4-2 4 2-4 2zM1 8l4-2 4 2-4 2zM5 12l4-2 4 2-4 2z" fill="#eee"/><circle cx="13" cy="13" r="5.500" fill="#d01933"/><path d="M11 11l4 4M15 11l-4 4" stroke="#fff" stroke-width="1.500"/></svg>
      <svg class="tr-mic" viewBox="0 0 16 22"><rect x="5" y="1" width="6" height="12" rx="3"/><path d="M1 9c0 5 3 7 7 7s7-2 7-7M8 16v5"/></svg>
      <div class="tr-lang"><span>NLD</span><span>INTL</span></div>
      <svg class="tr-wifi" viewBox="0 0 20 16"><path d="M1 5.500a13 13 0 0 1 18 0M4 8.500a9 9 0 0 1 12 0M6.500 11a5 5 0 0 1 7 0"/><circle class="fillw" cx="10" cy="14" r="1.300"/></svg>
      <svg class="tr-vol" viewBox="0 0 20 16"><path d="M1 5.500h3.500L9 2v12L4.500 10.500H1z"/><path d="M12 5c1.500 2 1.500 4 0 6M15 3c2.500 3 2.500 7 0 10"/><path class="dim" d="M18 2c3 4 3 8 0 12"/></svg>
      <svg class="tr-bat" viewBox="0 0 20 16"><rect x="5.500" y="3.500" width="12" height="9" rx="1.500"/><path d="M18 6.500h1.500v3H18"/><rect class="fillw" x="7" y="5" width="6" height="6"/><path class="fillw" d="M1 1.500h1v2H1zM3 1.500h1v2H3zM0 3.500h5V6L3 7v2H2V7L0 6z"/></svg>
      <div class="clock clock-l"><span>08:46</span><span>27/09/2022</span></div>
      <span class="tr-badge">11</span>
    </div>
  </footer>
</main>
</body>
</html>
```
FILE: styles.css
```css
* { box-sizing: border-box; }
html, body { margin: 0; padding: 0; background: #fff; }
body { width: 1920px; height: 2160px; overflow: hidden; font-family: "Noto Sans", "Open Sans", sans-serif; }
a { color: inherit; text-decoration: none; }
i { display: block; }
.sprite { position: absolute; width: 0; height: 0; }
.screen { display: flex; flex-direction: column; height: 2160px; }

/* ---------- Chrome window ---------- */
.chrome { height: 1032px; display: flex; flex-direction: column; }
.fav { width: 16px; height: 16px; flex: none; }

.tabstrip { height: 34px; background: #dee1e6; display: flex; padding-left: 8px; flex: none; }
.tab { width: 239px; height: 34px; display: flex; align-items: center; padding: 0 10px 2px 11px; gap: 9px; position: relative; font-size: 11.5px; letter-spacing: -.1px; color: #3c4043; }
.tab-sep::after { content: ""; position: absolute; right: 0; top: 8px; bottom: 6px; width: 1px; background: #8f9296; }
.tab-title { flex: 1; white-space: nowrap; min-width: 0; -webkit-mask-image: linear-gradient(to right, #000 88%, transparent 100%); mask-image: linear-gradient(to right, #000 88%, transparent 100%); }
.tab-title-narrow { letter-spacing: -.2px; }
.tab-title-plain { -webkit-mask-image: none; mask-image: none; }
.tab-x { width: 12px; height: 12px; flex: none; display: flex; margin-left: -6px; }
.tab-x svg { width: 9px; height: 9px; margin: auto; fill: none; stroke: #202124; stroke-width: 1.500; }
.tab-active { background: #fff; border-radius: 8px 8px 0 0; margin-left: 1px; width: 239px; color: #202124; }
.tab-active::before, .tab-active::after { content: ""; position: absolute; bottom: 0; width: 8px; height: 8px; }
.tab-active::before { left: -8px; background: radial-gradient(circle at 0 0, transparent 8px, #fff 8.5px); }
.tab-active::after { right: -8px; background: radial-gradient(circle at 100% 0, transparent 8px, #fff 8.5px); }
.new-tab { margin-left: 15px; width: 16px; display: flex; align-items: center; padding-bottom: 2px; }
.new-tab svg { width: 13px; height: 13px; fill: none; stroke: #333; stroke-width: 1.800; }
.win-ctl { margin-left: auto; display: flex; padding-right: 17px; padding-top: 8px; gap: 34px; height: 28px; }
.win-ctl svg { width: 12px; height: 12px; fill: none; stroke: #333; stroke-width: 1; }

.toolbar { height: 34px; background: #fff; display: flex; align-items: center; padding: 2px 6px 0 5px; flex: none; }
.tbtn { width: 32px; height: 28px; display: flex; align-items: center; justify-content: center; flex: none; }
.tbtn svg { width: 16px; height: 16px; fill: none; stroke: #5f6368; stroke-width: 1.800; }
.tbtn .solid { fill: #5f6368; stroke: none; }
.tbtn-off svg { stroke: #bdc1c6; }
.panel-ic rect { stroke-width: 1.500; }
.dot-blue { fill: #1a73e8; stroke: #fff; stroke-width: 1; }
.omnibox { flex: 1; height: 28px; margin: 0 7px 0 6px; background: #f1f3f4; border-radius: 14px; display: flex; align-items: center; padding-left: 10px; font-size: 13.500px; letter-spacing: -.05px; color: #5f6368; gap: 8px; }
.omni-text { flex: 1; white-space: nowrap; }
.omni-ic { width: 15px; height: 15px; fill: none; stroke: #5f6368; stroke-width: 1; margin-right: 9px; }
.omni-star { margin-right: 9px; margin-left: 1px; stroke-width: 1.300; stroke: #444; }
.avatar-s { width: 22px; height: 22px; border-radius: 50%; background: #01579b; color: #fff; font-size: 11px; display: flex; align-items: center; justify-content: center; }

.bookmarks { height: 35px; background: #fff; border-bottom: 1px solid #dadce0; display: grid; grid-template-columns: 86px 70px 84px 146px 148px 153px 148px 125px 113px 151px 143px 151px 150px 205px 20px; padding: 0 0 3px 14px; align-items: center; font-size: 11.500px; letter-spacing: -.1px; color: #3c4043; flex: none; }
.bm { display: flex; align-items: center; gap: 8px; white-space: nowrap; }
.bm-tight { letter-spacing: -.7px; }
.bm-more { font-size: 15px; color: #5f6368; text-align: center; }

.ntp { flex: 1; display: flex; flex-direction: column; align-items: center; font-family: Roboto, "Noto Sans", sans-serif; background: #fff; }
.ntp-top { align-self: stretch; display: flex; justify-content: flex-end; padding: 16px 18px 0 0; height: 48px; align-items: center; }
.ntp-link { font-size: 13px; color: #202124; margin-right: 15px; }
.apps { width: 24px; height: 24px; fill: #5f6368; margin: 0 20px 0 8px; }
.avatar-l { width: 32px; height: 32px; border-radius: 50%; background: #01579b; color: #fff; font-size: 17px; display: flex; align-items: center; justify-content: center; }
.logo { width: 272px; height: 92px; margin-top: 116px; flex: none; }
.searchbox { width: 561px; height: 44px; margin-top: 38px; border-radius: 22px; background: #fff; box-shadow: 0 1px 6px rgba(32,33,36,.28); display: flex; align-items: center; padding: 0 16px 0 16px; flex: none; margin-left: 1px; }
.s-ic { width: 24px; height: 24px; fill: #5f6368; transform: scale(.9); }
.s-text { flex: 1; margin-left: 12px; font-size: 16px; color: #5f6368; }
.s-mic { width: 24px; height: 24px; transform: scale(.92); }
.tiles { width: 560px; margin-top: 18px; display: grid; grid-template-columns: repeat(5, 112px); grid-auto-rows: 112px; color: #202124; flex: none; }
.tile { display: flex; flex-direction: column; align-items: center; padding-top: 16px; }
.tile-ic { width: 48px; height: 48px; border-radius: 50%; background: #f1f3f4; display: flex; align-items: center; justify-content: center; }
.tile-ic svg { width: 24px; height: 24px; }
.tile-name { width: 88px; margin-top: 14px; font-size: 13px; line-height: 20px; text-align: center; white-space: nowrap; }
.tile-cut { text-align: left; }
.customize { margin-top: auto; margin-bottom: 16px; align-self: flex-end; margin-right: 16px; width: 168px; height: 32px; border-radius: 16px; background: #fff; box-shadow: 0 1px 3px rgba(60,64,67,.45), 0 0 1px rgba(60,64,67,.2); display: flex; align-items: center; padding-left: 16px; gap: 8px; font-size: 13px; color: #1a73e8; white-space: nowrap; }
.customize svg { width: 16px; height: 16px; fill: #1a73e8; }

/* ---------- Taskbars ---------- */
.taskbar { background: #202020; display: grid; grid-template-columns: 1fr auto 1fr; align-items: center; flex: none; color: #fff; }
.tb-s { height: 48px; }
.tb-l { height: 60px; }
.tb-icons { display: flex; }
.tb-s .tb-icons { margin-left: 2px; }
.tb-item { display: flex; align-items: center; justify-content: center; position: relative; }
.tb-s .tb-item { width: 44px; height: 40px; }
.tb-l .tb-item { width: 55px; height: 50px; }
.tb-s .tb-item svg { width: 24px; height: 24px; }
.tb-l .tb-item svg { width: 30px; height: 30px; }
.tb-active { background: #2d2d2d; border-radius: 4px; box-shadow: inset 0 0 0 1px #333; }
.tb-active::after, .tb-run::after { content: ""; position: absolute; left: 50%; transform: translateX(-50%); height: 3px; border-radius: 2px; }
.tb-active::after { background: #0a84ff; bottom: 1px; }
.tb-run::after { background: #8a8a8a; bottom: 1px; width: 6px; }
.tb-s .tb-active::after { width: 16px; }
.tb-l .tb-active::after { width: 20px; }
.tb-badge { position: absolute; background: #0a84ff; color: #111; font-weight: 400; border-radius: 50%; display: flex; align-items: center; justify-content: center; }
.tb-s .tb-badge { width: 16px; height: 16px; font-size: 11px; right: 5px; top: 0; }
.tb-l .tb-badge { width: 20px; height: 20px; font-size: 14px; right: 8px; top: -2px; }
.tb-right { display: flex; justify-content: flex-end; align-items: center; }
.clock { display: flex; flex-direction: column; align-items: flex-end; }
.clock-s { margin-right: 18px; font-size: 11.500px; line-height: 16px; color: #c8c8c8; }
.clock-l { font-size: 14.500px; line-height: 20px; color: #f0f0f0; margin-left: 19px; }
.tray { padding-right: 21px; }
.tray svg { flex: none; }
.tr-chev { width: 16px; height: 9px; fill: none; stroke: #ddd; stroke-width: 1.300; }
.tr-cloud { width: 21px; height: 14px; fill: #d8d8d8; margin-left: 10px; }
.tr-drop { width: 20px; height: 20px; margin-left: 10px; }
.tr-mic { width: 15px; height: 20px; fill: none; stroke: #3f9be0; stroke-width: 1.500; margin-left: 17px; }
.tr-lang { display: flex; flex-direction: column; align-items: center; font-size: 14.500px; line-height: 20px; color: #f0f0f0; margin-left: 23px; width: 38px; }
.tr-wifi { width: 20px; height: 16px; fill: none; stroke: #f0f0f0; stroke-width: 1.400; margin-left: 16px; }
.tr-vol { width: 20px; height: 16px; fill: none; stroke: #f0f0f0; stroke-width: 1.300; margin-left: 9px; }
.tr-bat { width: 20px; height: 16px; fill: none; stroke: #f0f0f0; stroke-width: 1.300; margin-left: 11px; }
.tr-vol .dim { stroke: #666; }
.tray .fillw { fill: #f0f0f0; stroke: none; }
.tr-badge { width: 25px; height: 20px; border-radius: 10px; background: #0a84ff; color: #111; font-size: 13.500px; display: flex; align-items: center; justify-content: center; margin-left: 8px; }

/* ---------- Paint ---------- */
.paint { height: 1020px; display: flex; flex-direction: column; background: #f9f9f9; color: #1a1a1a; flex: none; }
.p-title { height: 42px; background: #f3f3f3; display: flex; align-items: center; padding: 0 0 2px 21px; flex: none; }
.p-logo { width: 20px; height: 20px; }
.p-name { margin-left: 19px; font-size: 14.400px; color: #1a1a1a; }
.p-ctl { margin-left: auto; display: flex; gap: 44px; padding-right: 25px; margin-top: -4px; }
.p-ctl svg { width: 14px; height: 14px; fill: none; stroke: #8a8a8a; stroke-width: 1.100; }
.p-menu { height: 47px; background: #f3f3f3; display: flex; align-items: center; padding-left: 18px; flex: none; }
.p-mi { width: 97px; font-size: 16.300px; line-height: 20px; color: #1a1a1a; margin-top: -2px; white-space: nowrap; }
.p-sep { width: 1px; height: 29px; background: #e3e3e3; margin-top: -5px; }
.p-sep-2 { margin-right: 4px; }
.p-qa { width: 55px; height: 47px; display: flex; align-items: center; justify-content: center; padding-bottom: 6px; }
.p-qa-s { width: 48px; }
.ic18 { width: 18px; height: 18px; }
.ic20 { width: 20px; height: 20px; }
.ic22 { width: 22px; height: 22px; flex: none; }
.ic28 { width: 28px; height: 28px; flex: none; }
.p-share { width: 22px; height: 22px; margin-left: auto; margin-right: 13px; margin-top: -6px; }

.ribbon { height: 150px; background: #f9f9f9; border-top: 1px solid #e8e8e8; border-bottom: 1px solid #e8e8e8; display: flex; padding-top: 5px; flex: none; }
.group { height: 138px; border-right: 1px solid #e8e8e8; padding-top: 4px; display: flex; flex-direction: column; flex: none; }
.g-body { height: 100px; display: flex; }
.g-label { height: 32px; line-height: 32px; text-align: center; font-size: 14.200px; color: #616161; white-space: nowrap; }
.g-clip { width: 127px; margin-left: 4px; }
.g-clip .g-body { padding-left: 11px; }
.g-img { width: 191px; }
.g-img .g-body { padding-left: 10px; }
.g-tools { width: 171px; }
.g-brush { width: 88px; }
.g-shapes { width: 345px; }
.g-size { width: 84px; }
.g-colors { width: 468px; border-right: 0; }

.big-cell { width: 50px; display: flex; flex-direction: column; align-items: center; padding-top: 25px; gap: 10px; }
.stack { display: grid; grid-template-rows: 50px 50px; width: 50px; }
.g-clip .stack { width: 60px; }
.stack-drop { width: 70px; }
.stack-drop .cell { justify-content: flex-start; padding-left: 14px; gap: 10px; }
.stack-shape { width: 70px; }
.stack-shape .cell { justify-content: flex-start; padding-left: 21px; gap: 10px; }
.cell { display: flex; align-items: center; justify-content: center; }
.chev { width: 10px; height: 10px; flex: none; }
.tools-grid { display: grid; grid-template-columns: repeat(3, 50px); grid-template-rows: 50px 50px; padding-left: 10px; }
.tool-a { font-family: "Liberation Serif", serif; font-size: 27px; color: #333; }
.brush-btn { width: 39px; height: 60px; margin: 20px 0 0 23px; border: 1.500px solid #1268b3; border-radius: 6px; display: flex; flex-direction: column; }
.brush-top { height: 38px; display: flex; align-items: center; justify-content: center; }
.brush-top svg { width: 18px; height: 30px; }
.brush-bot { flex: 1; margin: 0 2px; border-top: 1px solid #ccc; display: flex; align-items: center; justify-content: center; }
.shapes { width: 243px; height: 89px; margin: 5px 0 0 15px; border: 1px solid #ededed; border-radius: 7px; padding: 2px 0 0 7px; display: grid; grid-template-columns: repeat(8, 28px); grid-template-rows: repeat(3, 28px); place-items: center; flex: none; }
.shapes svg { width: 18px; height: 18px; fill: none; stroke: #2a2a2a; stroke-width: 1.100; }
.size-cell { width: 100%; }
.ic-size { width: 30px; height: 24px; margin-top: 3px; }
.size-cell .chev { margin-top: 3px; }
.cur-colors { width: 38px; margin: 8px 0 0 26px; display: flex; flex-direction: column; align-items: center; gap: 12px; flex: none; }
.cur-1 { width: 38px; height: 38px; border-radius: 50%; border: 1.500px solid #2e7ebb; padding: 2.500px; background: #fff; display: flex; }
.cur-1 i { flex: 1; border-radius: 50%; background: #000; }
.cur-2 { width: 30px; height: 30px; border-radius: 50%; background: #fff; border: 1.500px solid #a8a8a8; }
.palette { margin: 5px 0 0 21px; display: grid; grid-template-columns: repeat(10, 30px); grid-template-rows: repeat(3, 30px); place-items: center; width: 300px; height: 90px; flex: none; }
.sw { width: 20px; height: 20px; border-radius: 50%; }
.sw.ring { border: 1px solid #777; }
.sw.empty { border: 1.500px solid #a8a8a8; }
.sw-black { background: #000; } .sw-gray { background: #7f7f7f; } .sw-maroon { background: #880015; } .sw-red { background: #ed1c24; }
.sw-orange { background: #ff7f27; } .sw-yellow { background: #fff200; } .sw-green { background: #22b14c; } .sw-blue { background: #00a2e8; }
.sw-indigo { background: #3f48cc; } .sw-purple { background: #a349a4; } .sw-white { background: #fff; } .sw-silver { background: #c3c3c3; }
.sw-brown { background: #b97a57; } .sw-pink { background: #ffaec9; } .sw-gold { background: #ffc90e; } .sw-cream { background: #efe4b0; }
.sw-lime { background: #b5e61d; } .sw-sky { background: #99d9ea; } .sw-steel { background: #7092be; } .sw-lav { background: #c8bfe7; }
.wheel { width: 35px; height: 35px; margin: 33px 0 0 23px; padding-right: 3px; background: #fff; position: relative; display: flex; align-items: center; justify-content: center; flex: none; }
.wheel-disc { width: 30px; height: 30px; border-radius: 50%; background: radial-gradient(circle, #fff 0, rgba(255,255,255,0) 72%), conic-gradient(#ff0 0deg, #0f0 60deg, #0ff 100deg, #00f 170deg, #f0f 220deg, #f00 290deg, #ff0 360deg); }
.wheel-plus { position: absolute; width: 14px; height: 14px; right: 0; top: 1px; fill: #f9f9f9; stroke: #666; stroke-width: 1; }

.canvas-area { flex: 1; padding: 40px 0 0 40px; background: #f9f9f9; }
.canvas { width: 134px; height: 23px; background: #fff; box-shadow: 0 0 7px rgba(0,0,0,.09); position: relative; }
.handle { position: absolute; width: 5px; height: 5px; border: 1px solid #555; background: #fff; }
.h-r { left: 134px; top: 10px; }
.h-b { left: 65px; top: 23px; }
.h-c { left: 134px; top: 23px; }

.status { height: 40px; background: #f3f3f3; border-top: 1px solid #e8e8e8; display: flex; align-items: center; font-size: 13.500px; color: #1a1a1a; flex: none; }
.st-cell { height: 20px; display: flex; align-items: center; flex: none; border-right: 1px solid #e0e0e0; }
.st-cell svg { fill: none; stroke: #444; stroke-width: 1.300; flex: none; }
.st-1 { width: 174px; padding-left: 21px; }
.st-1 svg { width: 12px; height: 16px; }
.st-2 { width: 170px; padding-left: 16px; }
.st-2 svg { width: 16px; height: 16px; }
.st-3 { border-right: 0; padding-left: 16px; gap: 9px; font-size: 14.600px; }
.st-3 svg { width: 16px; height: 16px; }
.st-zoom { margin-left: auto; display: flex; align-items: center; padding-right: 18px; }
.st-pct { width: 35px; white-space: nowrap; margin-right: 27px; }
.st-z { width: 16px; height: 16px; fill: none; stroke: #333; stroke-width: 1.100; flex: none; }
.slider { width: 163px; height: 6px; margin: 0 16px 0 17px; background: #8a8a8a; border-radius: 3px; position: relative; }
.slider-fill { width: 62px; height: 6px; background: #0067c0; border-radius: 3px; }
.slider-thumb { position: absolute; left: 50px; top: -10px; width: 26px; height: 26px; border-radius: 50%; background: #0067c0; border: 6.500px solid #fff; box-shadow: 0 0 2px rgba(0,0,0,.2); }
```
